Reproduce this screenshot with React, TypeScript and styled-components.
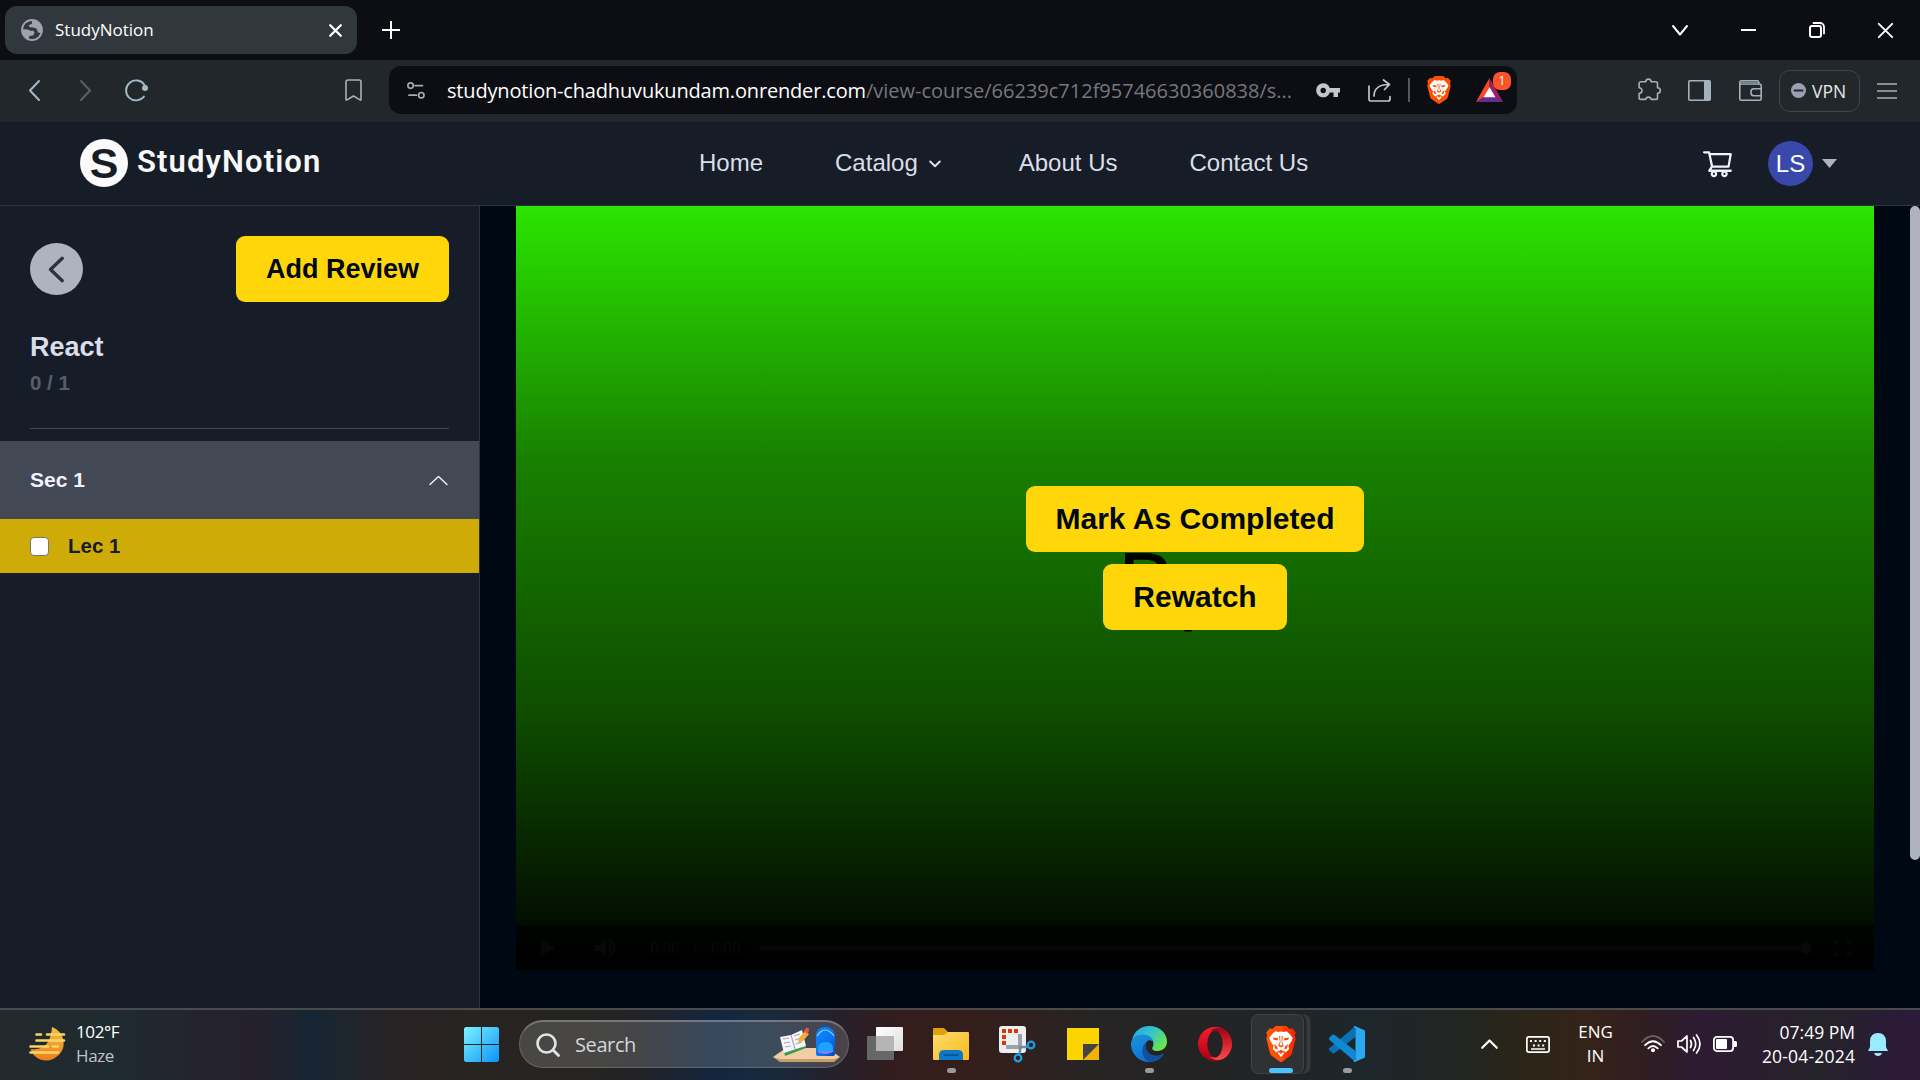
import React from "react";
import styled, { createGlobalStyle, css } from "styled-components";
import { AiOutlineShoppingCart } from "react-icons/ai";

const sys = `"Open Sans", "Noto Sans", sans-serif`;
const arial = `"Liberation Sans", Arial, sans-serif`;

const Global = createGlobalStyle`
  *, *::before, *::after { box-sizing: border-box; }
  body { margin: 0; background: #000814; overflow: hidden; }
  button { border: 0; font-family: inherit; cursor: pointer; }
`;

const Screen = styled.div`
  width: 1920px;
  height: 1080px;
  display: flex;
  flex-direction: column;
  font-family: ${arial};
`;

const Glyph = styled.svg<{ $ml?: number; $mt?: number }>`
  display: block;
  flex: none;
  margin-left: ${(p) => p.$ml ?? 0}px;
  margin-top: ${(p) => p.$mt ?? 0}px;
  overflow: visible;
`;

/* ---------- browser chrome ---------- */

const TabStrip = styled.header`
  height: 60px;
  flex: none;
  display: flex;
  align-items: center;
  padding: 0 27px 0 5px;
  background: #0d0e13;
`;

const Tab = styled.div`
  width: 352px;
  height: 48px;
  border-radius: 12px;
  background: #30383d;
  display: flex;
  align-items: center;
  padding: 0 15px 0 16px;
`;

const TabTitle = styled.span`
  flex: 1;
  margin-left: 12px;
  font: 400 17px/24px ${sys};
  color: #fff;
`;

const WindowButtons = styled.div`
  margin-left: auto;
  display: flex;
  align-items: center;
  gap: 53px;
`;

const Toolbar = styled.div`
  height: 62px;
  flex: none;
  display: flex;
  align-items: center;
  background: #22272b;
`;

const AddressBar = styled.div`
  width: 1128px;
  height: 48px;
  margin: -2px 0 0 27px;
  border-radius: 12px;
  background: #0d0e13;
  display: flex;
  align-items: center;
`;

const Url = styled.span`
  width: 869px;
  flex: none;
  margin: 2px 0 0 22px;
  white-space: nowrap;
  font: 400 20px/30px ${sys};
  letter-spacing: 0;
  color: #76787c;
  b {
    font-weight: 400;
    letter-spacing: -0.17px;
    color: #fff;
  }
`;

const Divider = styled.i`
  width: 2px;
  height: 24px;
  margin-left: 17px;
  background: #55585c;
`;

const Rewards = styled.div`
  position: relative;
  margin-left: 25px;
`;

const Badge = styled.span`
  position: absolute;
  left: 17px;
  top: -6px;
  width: 18px;
  height: 18px;
  border-radius: 7px;
  background: #fb542b;
  color: #fff;
  font: 400 12px/18px ${sys};
  text-align: center;
`;

const Vpn = styled.div`
  width: 81px;
  height: 42px;
  margin: -1px 0 0 17px;
  border: 1px solid #3c474c;
  border-radius: 11px;
  display: flex;
  align-items: center;
  padding-left: 11px;
  gap: 6px;
  font: 400 17.5px/24px ${sys};
  color: #e6e8ea;
`;

/* ---------- site ---------- */

const NavBar = styled.nav`
  height: 84px;
  flex: none;
  display: flex;
  align-items: center;
  padding-left: 80px;
  background: #161d27;
  border-bottom: 1px solid #2c333f;
`;

const Brand = styled.div`
  width: 619px;
  margin-top: -1px;
  display: flex;
  align-items: center;
  gap: 9px;
`;

const BrandMark = styled.span`
  width: 48px;
  height: 48px;
  border-radius: 50%;
  background: #fafafa;
  color: #161d27;
  font: 700 43px/48px ${arial};
  text-align: center;
`;

const BrandName = styled.span`
  font: 600 31px/40px Roboto, ${arial};
  letter-spacing: 1.1px;
  color: #f7f7f8;
  margin-top: -3px;
`;

const Links = styled.div`
  display: flex;
  gap: 72px;
  margin-top: -2px;
  font-size: 24px;
  line-height: 36px;
  color: #dbddea;
`;

const NavLink = styled.span`
  display: flex;
  align-items: center;
  gap: 5px;
  white-space: nowrap;
`;

const Account = styled.div`
  margin-left: auto;
  padding-right: 83px;
  display: flex;
  align-items: center;
  color: #f1f2ff;
`;

const Avatar = styled.span`
  width: 45px;
  height: 45px;
  margin-left: 34px;
  border-radius: 50%;
  background: #3949ab;
  font-size: 24px;
  line-height: 45px;
  text-align: center;
  color: #fff;
`;

const Body = styled.div`
  height: 802px;
  flex: none;
  display: flex;
  background: #000814;
`;

const Sidebar = styled.aside`
  width: 480px;
  background: #161d29;
  border-right: 1px solid #2c333f;
`;

const CourseHead = styled.div`
  height: 223px;
  margin: 0 30px 12px;
  padding-top: 30px;
  border-bottom: 1px solid #424854;
`;

const HeadRow = styled.div`
  display: flex;
  align-items: center;
  justify-content: space-between;
`;

const BackButton = styled.button`
  width: 53px;
  height: 52px;
  padding: 0;
  border-radius: 50%;
  background: #afb2bf;
`;

const YellowButton = styled.button<{ $size: number }>`
  padding: 12px 30px;
  border-radius: 9px;
  background: #ffd60a;
  color: #000814;
  font: 700 ${(p) => p.$size}px/42px ${arial};
  white-space: nowrap;
`;

const CourseTitle = styled.h1`
  margin: 24px 0 0;
  font-size: 27px;
  line-height: 42px;
  color: #dbddea;
`;

const Progress = styled.p`
  margin: 0;
  font-size: 20.5px;
  line-height: 30px;
  font-weight: 700;
  color: #585d69;
`;

const rowText = css`
  display: flex;
  align-items: center;
  padding: 0 30px;
  font-size: 21px;
  font-weight: 700;
`;

const SectionRow = styled.div`
  ${rowText}
  height: 78px;
  justify-content: space-between;
  background: #424854;
  color: #f1f2ff;
`;

const LectureRow = styled.label`
  ${rowText}
  height: 54px;
  gap: 19px;
  font-size: 20.5px;
  background: #cfab08;
  color: #161d29;
`;

const Check = styled.input`
  appearance: none;
  width: 19px;
  height: 19px;
  margin: 0;
  border: 1px solid #767676;
  border-radius: 4px;
  background: #fff;
`;

const Main = styled.main`
  flex: 1;
  display: flex;
  justify-content: space-between;
  padding-left: 36px;
`;

const Video = styled.section`
  width: 1358px;
  height: 764px;
  display: grid;
  background: #30ff00;
  > * {
    grid-area: 1 / 1;
  }
`;

const Slide = styled.div`
  align-self: start;
  justify-self: start;
  margin: 326px 0 0 601px;
  font: 400 88px/100px Lato, sans-serif;
  color: #000;
`;

const Shade = styled.div`
  z-index: 1;
  display: flex;
  flex-direction: column;
  align-items: center;
  gap: 12px;
  padding-top: 280px;
  background: linear-gradient(to top, #000, rgba(0, 0, 0, 0.7), rgba(0, 0, 0, 0.5), rgba(0, 0, 0, 0.1));
`;

const Controls = styled.div`
  z-index: 2;
  align-self: end;
  height: 45px;
  display: flex;
  align-items: center;
  padding-left: 25px;
  background: linear-gradient(rgba(0, 0, 0, 0.65), #000);
  color: #080808;
`;

const Clock = styled.span`
  width: 109px;
  margin-left: 33px;
  font: 500 15px/20px Roboto, sans-serif;
  word-spacing: 9px;
`;

const Scrollbar = styled.div`
  width: 10px;
  height: 654px;
  border-radius: 5px;
  background: #afb2bf;
`;

/* ---------- taskbar ---------- */

const Taskbar = styled.footer`
  height: 72px;
  flex: none;
  display: flex;
  align-items: center;
  padding-bottom: 2px;
  border-top: 2px solid #494a4c;
  color: #fff;
  background: linear-gradient(
    90deg,
    #23292c 0, #1e2b30 110px, #25232d 200px, #24212c 260px, #162633 315px, #242429 365px,
    #2a2224 410px, #272422 470px, #262421 580px, #222326 640px, #13263f 715px, #182a3c 770px,
    #25202a 835px, #341d1c 900px, #331f1c 990px, #272424 1090px, #232323 1200px, #1d262b 1360px,
    #222522 1460px, #2b2518 1520px, #35231a 1590px, #2f1d23 1650px, #2d1b33 1700px,
    #291f2d 1770px, #25232a 1820px, #2b1a38 1900px
  );
`;

const Weather = styled.div`
  width: 435px;
  padding-left: 29px;
  display: flex;
  align-items: center;
  gap: 11px;
`;

const Lines = styled.div<{ $align?: string; $size?: number; $track?: number; $second?: string; $ml?: number }>`
  display: flex;
  flex-direction: column;
  margin: -1px 0 0 ${(p) => p.$ml ?? 0}px;
  text-align: ${(p) => p.$align ?? "left"};
  font: 400 ${(p) => p.$size ?? 17}px/24px ${sys};
  letter-spacing: ${(p) => p.$track ?? 0}px;
  white-space: nowrap;
  span:last-child {
    color: ${(p) => p.$second ?? "#fff"};
  }
`;

const SearchBox = styled.div`
  width: 330px;
  height: 48px;
  margin: 0 3px 0 20px;
  border: 1px solid rgba(255, 255, 255, 0.16);
  border-top: 2px solid rgba(255, 255, 255, 0.26);
  border-radius: 24px;
  background: rgba(255, 255, 255, 0.16);
  display: flex;
  align-items: center;
  padding: 0 8px 0 16px;
`;

const SearchLabel = styled.span`
  flex: 1;
  margin-left: 15px;
  font: 400 20px/28px ${sys};
  letter-spacing: -0.4px;
  color: #d4d6d8;
`;

const AppSlot = styled.div<{ $state?: "running" | "active" }>`
  width: 66px;
  height: 60px;
  flex: none;
  display: flex;
  flex-direction: column;
  align-items: center;
  padding-top: 12px;
  &::after {
    content: "";
    flex: none;
    width: ${(p) => (p.$state === "active" ? 24 : 9)}px;
    height: 5px;
    margin-top: 6px;
    border-radius: 3px;
    background: ${(p) => (p.$state === "active" ? "#4cc2ff" : p.$state === "running" ? "#9a9a9a" : "transparent")};
  }
  ${(p) =>
    p.$state === "active" &&
    css`
      width: 53px;
      margin: 0 10px 0 3px;
      border: 1px solid #414244;
      border-radius: 7px;
      background: #303133;
      padding: 11px 0 0 7px;
      box-shadow: 3px 0 0 -0.5px #252627, 7px 0 0 -0.5px #38393b;
    `}
`;

const Tray = styled.div`
  margin-left: auto;
  padding-right: 32px;
  display: flex;
  align-items: center;
`;

const DateText = styled.span`
  letter-spacing: 0.2px;
  margin-right: -0.2px;
`;

const Lion = ({ w, h, ml, gradient }: { w: number; h: number; ml?: number; gradient?: boolean }) => (
  <Glyph $ml={ml} width={w} height={h} viewBox="0 0 30 36" preserveAspectRatio="none">
    <defs>
      <linearGradient id="lionFill" x1="0" y1="0" x2="1" y2="0">
        <stop offset="0" stopColor="#ff5a00" />
        <stop offset=".5" stopColor="#ff4a0a" />
        <stop offset="1" stopColor="#f92000" />
      </linearGradient>
    </defs>
    <path
      d="M9.5 0h11l2.6 2.8 3.3-.3L29.8 6.5l-1 3 .9 3-3.7 14.7c-.4 1.4-1.3 2.3-2.4 3.1L16.5 35.4q-1.5 1-3 0L6.4 30.3C5.300 29.500 4.400 28.600 4 27.200L.3 12.500l.9-3-1-3L3.600 2.500l3.300.3z"
      fill={gradient ? "url(#lionFill)" : "#fb4f04"}
    />
    <path
      d="M9.500 5.300 12.200 6 15 5.600 17.800 6l2.700-.7 3 2.400 3.300 4.300-1.400 3.500-3 4.200.8 3.200-3.400 3.300-2.600-1.600-.1 1.300 1.200 1.100-3.300 4.300-3.300-4.300 1.200-1.100-.1-1.300-2.600 1.600-3.400-3.300.8-3.200-3-4.200-1.400-3.500 3.300-4.300z"
      fill="#fff"
    />
    <path
      d="M7 11.600l5 .6-.3 2.300-4-.7zM23 11.600l-5 .6.3 2.300 4-.7zM12.900 10.300h4.200l-1 5.500 1.800 3.900L15 21.600l-2.900-1.900 1.800-3.900zM8 18l3 2.500 1 3-3-1zM22 18l-3 2.500-1 3 3-1zM12 25.500l3-1.800 3 1.800-3 2.500z"
      fill="#fb4c08"
    />
    <path d="M14.200 10.300h1.600l-.2 6 1 2.500-1.600 1-1.600-1 1-2.500z" fill="#fff" />
  </Glyph>
);

const line = (color: string, width = 2) => ({
  fill: "none",
  stroke: color,
  strokeWidth: width,
  strokeLinecap: "round" as const,
  strokeLinejoin: "round" as const,
});

const tool = line("#a3b2ba", 1.6);

const BrowserTabs = () => (
  <TabStrip>
    <Tab>
      <Glyph width="22" height="22" viewBox="0 0 22 22">
        <circle cx="11" cy="11" r="10" fill="none" stroke="#a0a3ac" strokeWidth="1.8" />
        <path d="M11 1a10 10 0 0 1 9.500 13l-3.600-.6-1.100-3.700-3.200-1.200-3.800-.2-1.200-2.100 3.300-1.400zM1.300 10.200l5.600.2 2.500 1.300 3 .1 1.200 2-1.500 2.600-3.800.6-.5 3.300C3 18 1 14 1.300 10.200z" fill="#a0a3ac" />
      </Glyph>
      <TabTitle>StudyNotion</TabTitle>
      <Glyph width="13" height="13" viewBox="0 0 13 13"><path d="M1.200 1.200l10.600 10.600M11.800 1.200L1.200 11.800" {...line("#fff", 2.3)} /></Glyph>
    </Tab>
    <Glyph $ml={25} width="18" height="18" viewBox="0 0 18 18"><path d="M9 0v18M0 9h18" stroke="#fff" strokeWidth="2" /></Glyph>
    <WindowButtons>
      <Glyph width="16" height="11" viewBox="0 0 16 11"><path d="M1 1l7 8.500L15 1" {...line("#fff")} /></Glyph>
      <Glyph width="15" height="3" viewBox="0 0 15 3"><path d="M0 1h15" stroke="#fff" strokeWidth="2" /></Glyph>
      <Glyph width="16" height="16" viewBox="0 0 16 16"><rect x="1" y="4" width="11" height="11" rx="2" {...line("#fff")} /><path d="M4.500 1h6.500a4 4 0 0 1 4 4v6.500" {...line("#fff", 1.8)} /></Glyph>
      <Glyph width="15" height="15" viewBox="0 0 15 15"><path d="M.8.8l13.400 13.400M14.200.8L.8 14.200" {...line("#fff", 1.9)} /></Glyph>
    </WindowButtons>
  </TabStrip>
);

const BrowserToolbar = () => (
  <Toolbar>
    <Glyph $ml={29} $mt={-2} width="11" height="21" viewBox="0 0 11 21"><path d="M10 1L1 10.500 10 20" {...line("#a3b9c4")} /></Glyph>
    <Glyph $ml={40} $mt={-2} width="11" height="21" viewBox="0 0 11 21"><path d="M1 1l9 9.500L1 20" {...line("#566166")} /></Glyph>
    <Glyph $ml={34} $mt={-3} width="23" height="22" viewBox="0 0 23 22">
      <path d="M19.500 6A10 10 0 1 0 19 17.500" {...line("#a3b9c4", 1.9)} />
      <circle cx="20" cy="9" r="3" fill="#a3b9c4" />
    </Glyph>
    <Glyph $ml={197} $mt={-3} width="17" height="22" viewBox="0 0 17 22"><path d="M3 1h11a2 2 0 0 1 2 2v17.500q0 1-1 .4L8.500 17 2 20.900q-1 .6-1-.4V3a2 2 0 0 1 2-2z" {...tool} /></Glyph>
    <AddressBar>
      <Glyph $ml={18} width="18" height="17" viewBox="0 0 18 17">
        <circle cx="3.600" cy="3.600" r="2.700" {...line("#a9abaf", 1.7)} /><path d="M8 3.600h7.500M2 13.200h7.500" {...line("#a9abaf", 1.7)} /><circle cx="14.300" cy="13.200" r="2.700" {...line("#a9abaf", 1.7)} />
      </Glyph>
      <Url><b>studynotion-chadhuvukundam.onrender.com</b>/view-course/66239c712f95746630360838/s...</Url>
      <Glyph width="24" height="15" viewBox="0 0 24 15"><path fillRule="evenodd" d="M7.200.3a7 7 0 0 1 6.600 4.700H24v4.500h-2V14h-4.500V9.500h-3.700A7 7 0 1 1 7.200.3zm0 4.500a2.700 2.700 0 1 0 0 5.400 2.700 2.700 0 0 0 0-5.400z" fill="#c4c6c9" /></Glyph>
      <Glyph $ml={28} width="23" height="23" viewBox="0 0 23 23"><path d="M1 7v13.500A1.500 1.500 0 0 0 2.500 22h17.500a2 2 0 0 0 2-2v-2.500M6 17c0-7 5-11.500 15-11.500M15.500 1L21.500 5.500l-5 5" {...line("#c4c6c9", 1.7)} /></Glyph>
      <Divider />
      <Lion ml={17} w={24} h={28} />
      <Rewards>
        <Glyph width="27" height="24" viewBox="0 0 27 24">
          <path d="M13.500 0L0 24l7.500-4.500 6-10.500z" fill="#ff4724" /><path d="M13.500 0L27 24l-7.500-4.500-6-10.500z" fill="#9e1f63" /><path d="M0 24h27l-7.500-5h-12z" fill="#662d91" /><path d="M13.500 9l6 10.300h-12z" fill="#fff" />
        </Glyph>
        <Badge>1</Badge>
      </Rewards>
    </AddressBar>
    <Glyph $ml={121} $mt={-3} width="23" height="23" viewBox="0 0 23 23"><path d="M3 3.800h4.700a2.700 2.700 0 0 1 5.400 0h4.700a1.700 1.700 0 0 1 1.700 1.700v4.200a2.800 2.800 0 0 1 0 5.600v4.400a1.700 1.700 0 0 1-1.700 1.700h-4.600a2.800 2.800 0 0 0-5.500 0H2.800A1.700 1.700 0 0 1 1.100 19.700V15.500a2.900 2.900 0 0 0 0-5.800V5.500A1.700 1.700 0 0 1 3 3.800z" {...tool} /></Glyph>
    <Glyph $ml={27} $mt={-2} width="23" height="21" viewBox="0 0 23 21"><rect x=".8" y=".8" width="21.400" height="19.400" rx="1" {...tool} /><path d="M16 1h6v19h-6z" fill="#a3b2ba" /></Glyph>
    <Glyph $ml={28} $mt={-2} width="23" height="21" viewBox="0 0 23 21"><path d="M2.500.8h15.500q2 0 2 3.200h.7q1.500 0 1.500 1.500v13.200q0 1.500-1.500 1.500H2.300Q.8 20.200.8 18.700V2.500Q.8.800 2.500.8zM1 4h19M22 8.800h-7.500q-2.500 0-2.500 3.500t2.500 3.500H22" {...tool} /><path d="M2 1.500h17V4H2z" fill="#77838a" /></Glyph>
    <Vpn>
      <Glyph width="15" height="15" viewBox="0 0 15 15"><circle cx="7.500" cy="7.500" r="7.500" fill="#9c9fb4" /><path d="M3.500 7.500h8" {...line("#22272b")} /></Glyph>
      VPN
    </Vpn>
    <Glyph $ml={17} $mt={-1} width="20" height="16" viewBox="0 0 20 16"><path d="M0 1h20M0 8h20M0 15h20" stroke="#a3b2ba" strokeWidth="1.700" /></Glyph>
  </Toolbar>
);

const SiteNav = () => (
  <NavBar>
    <Brand><BrandMark>S</BrandMark><BrandName>StudyNotion</BrandName></Brand>
    <Links>
      <NavLink>Home</NavLink>
      <NavLink>Catalog<Glyph width="24" height="24" viewBox="0 0 24 24"><path d="M7.200 10.500l4.800 4.800 4.800-4.800" {...line("#dbddea")} /></Glyph></NavLink>
      <NavLink>About Us</NavLink>
      <NavLink>Contact Us</NavLink>
    </Links>
    <Account>
      <AiOutlineShoppingCart size={33} />
      <Avatar>LS</Avatar>
      <Glyph $ml={9} width="15" height="9" viewBox="0 0 15 9"><path d="M0 0h15L7.500 9z" fill="#afb2bf" /></Glyph>
    </Account>
  </NavBar>
);

const CourseSidebar = () => (
  <Sidebar>
    <CourseHead>
      <HeadRow>
        <BackButton aria-label="Back"><Glyph width="53" height="52" viewBox="0 0 53 52"><path d="M32.300 15.300L20.500 26.500l11.800 11.200" {...line("#2c333f", 3.4)} /></Glyph></BackButton>
        <YellowButton $size={27}>Add Review</YellowButton>
      </HeadRow>
      <CourseTitle>React</CourseTitle>
      <Progress>0 / 1</Progress>
    </CourseHead>
    <SectionRow>
      Sec 1
      <Glyph width="21" height="12" viewBox="0 0 21 12"><path d="M2 10.500l8.500-8 8.500 8" {...line("#f1f2ff", 1.400)} /></Glyph>
    </SectionRow>
    <LectureRow><Check type="checkbox" />Lec 1</LectureRow>
  </Sidebar>
);

const Player = () => (
  <Video>
    <Slide>Bye</Slide>
    <Shade>
      <YellowButton $size={30}>Mark As Completed</YellowButton>
      <YellowButton $size={30}>Rewatch</YellowButton>
    </Shade>
    <Controls>
      <Glyph width="14" height="17" viewBox="0 0 14 17"><path d="M0 0l14 8.500L0 17z" fill="currentColor" /></Glyph>
      <Glyph $ml={40} width="22" height="20" viewBox="0 0 22 20"><path d="M0 7h5l6-6v18l-6-6H0z" fill="currentColor" /><path d="M14 6q3 4 0 8M14 1.500q11 8.500 0 17" fill="none" stroke="currentColor" strokeWidth="2.300" /></Glyph>
      <Clock>0:00 / 0:00</Clock>
      <Glyph width="1054" height="12" viewBox="0 0 1054 12"><rect y="3.500" width="1050" height="5" rx="2.500" fill="currentColor" /><circle cx="1047" cy="6" r="6" fill="currentColor" /></Glyph>
      <Glyph $ml={21} width="17" height="16" viewBox="0 0 17 16"><path d="M1 5V1h4M12 1h4v4M16 11v4h-4M5 15H1v-4" fill="none" stroke="currentColor" strokeWidth="2.400" /></Glyph>
    </Controls>
  </Video>
);

const WindowsTaskbar = () => (
  <Taskbar>
    <Weather>
      <Glyph width="36" height="34" viewBox="0 0 36 34">
        <defs><linearGradient id="sun" x1="0" y1="0" x2="0" y2="1"><stop offset="0" stopColor="#f3c13a" /><stop offset="1" stopColor="#f07e1d" /></linearGradient></defs>
        <path d="M23 0c15 6 16 25 1 32C15 36 5 32 1.500 22c9 1 20-1 21.500-22z" fill="url(#sun)" />
        <path d="M7.500 7.500h4.500M18 7.500h17M7.500 13.500H35M1.500 19.500H19M24 19.500h5M1.500 25.500H29" {...line("#f6d66b", 2.600)} />
      </Glyph>
      <Lines $second="#bfc3c6" $track={-0.4}><span>102°F</span><span>Haze</span></Lines>
    </Weather>
    <Glyph $ml={29} width="35" height="35" viewBox="0 0 35 35">
      <defs><linearGradient id="win" gradientUnits="userSpaceOnUse" x1="0" y1="0" x2="35" y2="35"><stop offset="0" stopColor="#7df3ff" /><stop offset="1" stopColor="#0a93f8" /></linearGradient></defs>
      <path d="M1.500 0H17v17H0V1.500zM18 0h15.500L35 1.500V17H18zM0 18h17v17H1.500L0 33.500zM18 18h17v15.500L33.500 35H18z" fill="url(#win)" />
    </Glyph>
    <SearchBox>
      <Glyph width="24" height="24" viewBox="0 0 24 24"><circle cx="10.500" cy="10.500" r="9" {...line("#e2e5e8", 2.600)} /><path d="M17 17l5.500 5.500" {...line("#e2e5e8", 2.800)} /></Glyph>
      <SearchLabel>Search</SearchLabel>
      <Glyph width="67" height="37" viewBox="0 0 67 37">
        <defs><linearGradient id="bag" x1="0" y1="0" x2="1" y2="1"><stop offset="0" stopColor="#0a8dfb" /><stop offset=".6" stopColor="#0a72f0" /><stop offset="1" stopColor="#0644b8" /></linearGradient></defs>
        <path d="M13 22h41l13 9-6 4H7l-7-4z" fill="#f0cda3" /><path d="M0 31l7 5h54l6-5-6 2H7z" fill="#c89d70" />
        <path d="M8 12l21-5 4 15-21 8z" fill="#3c9b4a" /><path d="M7 11l11-2 11-5 4 16-10 3-12 4z" fill="#f5f5fa" />
        <path d="M18 9l4 14M10 13l6-1M11 17l6-1M12 21l6-1M21 10l6-2M22 14l6-2M23 18l6-2" stroke="#aaa6bd" strokeWidth="1.200" fill="none" />
        <path d="M25 17l1-5 6-7 4 3-6 7z" fill="#f8ae32" /><path d="M31 5l2-3q3-1 3 3l-2 3z" fill="#ef5350" />
        <path d="M48 2q4-4 8 0" fill="none" stroke="#0b55c9" strokeWidth="1.500" /><path d="M43 28V11q0-10 9.500-10T62 11v17q0 2-2 2H45q-2 0-2-2z" fill="url(#bag)" />
        <path d="M44 10q8-12 17 0" fill="none" stroke="#8fd2ff" strokeWidth="1.200" /><path d="M45 26v-4q0-6 7.500-6t7.500 6v4z" fill="#1fa2ff" /><path d="M45 25q7 4 15 0" fill="none" stroke="#9a7bff" strokeWidth="1.800" />
      </Glyph>
    </SearchBox>
    <AppSlot>
      <Glyph width="36" height="36" viewBox="0 0 36 36">
        <defs><linearGradient id="tv" x1="0" y1="0" x2="1" y2="1"><stop offset="0" stopColor="#fff" /><stop offset="1" stopColor="#dedede" /></linearGradient></defs>
        <rect y="10" width="27" height="24" rx="1" fill="#666768" /><rect x="9" y="1" width="27" height="24" rx="1" fill="url(#tv)" /><path d="M9 10h18v15H9z" fill="#b5b5b5" />
      </Glyph>
    </AppSlot>
    <AppSlot $state="running">
      <Glyph width="36" height="36" viewBox="0 0 36 36">
        <defs><linearGradient id="fold" x1="0" y1="0" x2="1" y2="1"><stop offset="0" stopColor="#ffdc72" /><stop offset="1" stopColor="#f9b916" /></linearGradient></defs>
        <path d="M0 3q0-1 1-1h10l4 4h20v10H0z" fill="#dfa00d" /><path d="M0 9h11l4-3h20q1 0 1 1v26q0 1-1 1H1q-1 0-1-1z" fill="url(#fold)" /><path d="M6 34v-5q0-5 5-5h14q5 0 5 5v5z" fill="#0f78c9" /><path d="M11 29h14" {...line("#084c87", 1.600)} />
      </Glyph>
    </AppSlot>
    <AppSlot>
      <Glyph width="36" height="36" viewBox="0 0 36 36">
        <rect width="27" height="27" rx="3" fill="#eceef1" /><path d="M3 5h16M5 9v11" stroke="#d83b01" strokeWidth="4" strokeDasharray="4 2" />
        <path d="M7 21h16M21 8v15" stroke="#9aa2ab" strokeWidth="4" /><path d="M21 20v6M20 21h8" stroke="#7e868e" strokeWidth="2.500" />
        <circle cx="32" cy="19" r="3.300" {...line("#1c9de0", 2.300)} /><circle cx="19" cy="32" r="3.300" {...line("#1c9de0", 2.300)} /><path d="M20 29l1-3M27 21l3-1" stroke="#1c9de0" strokeWidth="2" />
      </Glyph>
    </AppSlot>
    <AppSlot>
      <Glyph width="32" height="36" viewBox="0 0 32 36"><path d="M0 2h32v32H0z" fill="#fcd500" /><path d="M16 34l16-16v16z" fill="#f2b200" /><path d="M16 34V18h16z" fill="#434343" /></Glyph>
    </AppSlot>
    <AppSlot $state="running">
      <Glyph width="36" height="36" viewBox="0 0 36 36">
        <defs>
          <linearGradient id="edgeTop" x1="0" y1="0" x2="1" y2=".6"><stop offset="0" stopColor="#22a5e6" /><stop offset=".5" stopColor="#33c3cf" /><stop offset="1" stopColor="#69e54f" /></linearGradient>
          <linearGradient id="edgeLow" x1="0" y1="0" x2=".6" y2="1"><stop offset="0" stopColor="#1b94dc" /><stop offset="1" stopColor="#0b6fd4" /></linearGradient>
        </defs>
        <path d="M1 14C3 5 10 0 18 0c11 0 18 7.500 18 15.500 0 6-4.500 9.500-9.500 9.500-4 0-6-1.500-5-3.500 3-5-1-12.500-9.500-12.500C6 9 2 12 1 14z" fill="url(#edgeTop)" />
        <path d="M0 18C0 12 6 8.500 12 8.500c6 0 10 4 10.500 8-2-3.500-7.500-3.500-8 2.500-.5 7 6 12.500 14 10.500 2-.5 3.500-1.500 4-1C29 33.500 24 36 18 36 8 36 0 28 0 18z" fill="url(#edgeLow)" />
        <path d="M15 16c-3 7 3 15 13 13.500l5-1.500c-4 6-9 8-14 8-8-2-10-14-4-20z" fill="#114fa0" />
      </Glyph>
    </AppSlot>
    <AppSlot>
      <Glyph width="34" height="36" viewBox="0 0 34 36">
        <defs><linearGradient id="op" x1="0" y1="0" x2="0" y2="1"><stop offset="0" stopColor="#ff1b2d" /><stop offset="1" stopColor="#a70014" /></linearGradient><linearGradient id="opr" x1="0" y1="0" x2="0" y2="1"><stop offset="0" stopColor="#a40012" /><stop offset="1" stopColor="#ff4b4b" /></linearGradient></defs>
        <ellipse cx="17" cy="18" rx="17" ry="17" fill="url(#op)" /><path d="M11 5.500C24-4 34 8 34 18S24 40 11 30.500c3 2 13 1.500 13-12.500S15 4 11 5.500z" fill="url(#opr)" /><ellipse cx="17" cy="18" rx="7.700" ry="13.500" fill="#232323" />
      </Glyph>
    </AppSlot>
    <AppSlot $state="active"><Lion w={30} h={36} gradient /></AppSlot>
    <AppSlot $state="running">
      <Glyph width="36" height="36" viewBox="0 0 36 36"><path d="M26.500 0v11L5 27.500 3.500 27.300 0 24v-1.500z" fill="#0872b5" /><path d="M26.500 36V25L5 8.500 3.500 8.700 0 12v1.500z" fill="#1089d3" /><path d="M26 0l10 4.500v27L26 36c-1 .3-1.500-.5-1.500-1.200L26.500 34V2l-2-.8C24.500.5 25 0 26 0z" fill="#2aa8f2" /></Glyph>
    </AppSlot>
    <Tray>
      <Glyph width="17" height="10" viewBox="0 0 17 10"><path d="M1.200 8.800l7.300-7.300 7.300 7.300" {...line("#fff", 2.200)} /></Glyph>
      <Glyph $ml={28} width="24" height="17" viewBox="0 0 24 17"><rect x=".9" y=".9" width="22.200" height="15.200" rx="2" {...line("#fff", 1.700)} /><path d="M4 5h16M7 9.500h12" stroke="#fff" strokeWidth="2" strokeDasharray="2 2.600" /><path d="M5 13h14" stroke="#fff" strokeWidth="1.500" /></Glyph>
      <Lines $align="center" $ml={28}><span>ENG</span><span>IN</span></Lines>
      <Glyph $ml={28} width="24" height="18" viewBox="0 0 24 18"><path d="M1 7Q12-5 23 7" {...line("#6b5d60", 1.800)} /><path d="M4 10.200q8-8 16 0M7.300 13.300q4.700-4.500 9.400 0" {...line("#fff", 1.800)} /><circle cx="12" cy="15.300" r="2" fill="#fff" /></Glyph>
      <Glyph $ml={12} width="24" height="20" viewBox="0 0 24 20"><path d="M1 7h3.500L10 2v16l-5.500-5H1zM13.500 6.500q2 3.500 0 7M16.500 3.500q4.500 6.500 0 13M19.500 1q7 9 0 18" {...line("#fff", 1.700)} /></Glyph>
      <Glyph $ml={12} width="24" height="16" viewBox="0 0 24 16"><rect x=".9" y=".9" width="19.200" height="14.200" rx="3" {...line("#fff", 1.800)} /><rect x="3" y="3" width="11" height="10" rx="1" fill="#fff" /><path d="M21 5h1.500q1.500 0 1.500 1.500v3q0 1.500-1.500 1.500H21z" fill="#fff" /></Glyph>
      <Lines $align="right" $size={17.5} $ml={25}><span>07:49 PM</span><DateText>20-04-2024</DateText></Lines>
      <Glyph $ml={13} width="20" height="23" viewBox="0 0 20 23"><path d="M10 0q7.500 0 8 8v6l2 4H0l2-4V8q.5-8 8-8zM6 20h8q-1 3-4 3t-4-3z" fill="#99ebff" /></Glyph>
    </Tray>
  </Taskbar>
);

export default function App() {
  return (
    <Screen>
      <Global />
      <BrowserTabs />
      <BrowserToolbar />
      <SiteNav />
      <Body>
        <CourseSidebar />
        <Main>
          <Player />
          <Scrollbar />
        </Main>
      </Body>
      <WindowsTaskbar />
    </Screen>
  );
}
